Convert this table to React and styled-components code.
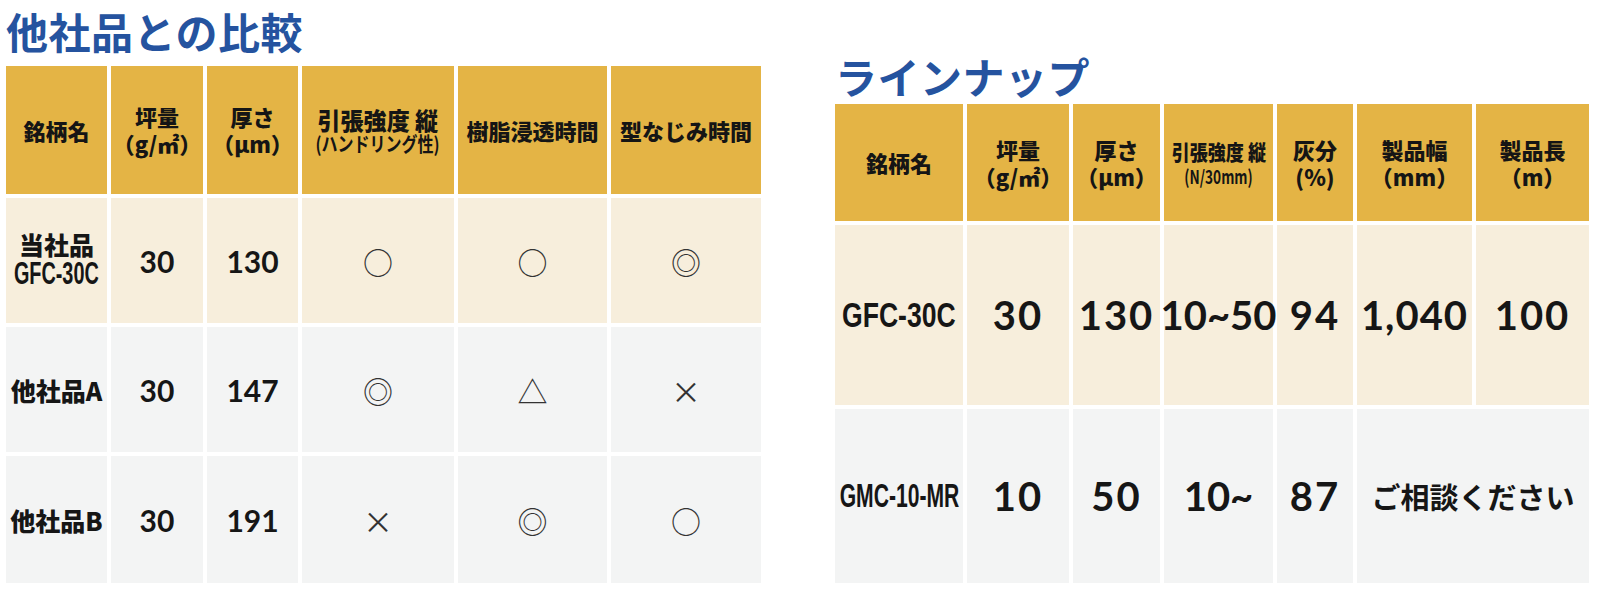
import React from "react";
import styled, { createGlobalStyle, css } from "styled-components";

const GlobalStyle = createGlobalStyle`
  html, body {
    margin: 0;
    padding: 0;
    background: #ffffff;
  }
  body {
    font-family: "Noto Sans CJK JP", "Noto Sans", sans-serif;
    color: #161616;
  }
`;

const colors = {
  title: "#25539f",
  head: "#e4b445",
  cream: "#f7eedc",
  gray: "#f3f4f4",
  mark: "#333333"
};

const Page = styled.div`
  display: flex;
  align-items: flex-start;
  width: 1600px;
  height: 597px;
  padding-left: 6px;
  box-sizing: border-box;
  overflow: hidden;
`;

const Section = styled.section`
  display: flex;
  flex-direction: column;
  padding-top: ${({ $top }) => $top}px;
  margin-left: ${({ $left = 0 }) => $left}px;
`;

const Title = styled.h2`
  margin: 0 0 ${({ $after }) => $after}px;
  font-size: 42px;
  line-height: 42px;
  font-weight: 700;
  color: ${colors.title};
  letter-spacing: 0.5px;
`;

const Grid = styled.div`
  display: grid;
  grid-template-columns: ${({ $cols }) => $cols};
  grid-template-rows: ${({ $rows }) => $rows};
  gap: 4px;
`;

const cellBase = css`
  display: flex;
  flex-direction: column;
  align-items: center;
  justify-content: center;
  text-align: center;
  white-space: nowrap;
  overflow: visible;
`;

const HeadCell = styled.div`
  ${cellBase};
  background: ${colors.head};
  font-weight: 900;
  font-size: ${({ $size = 22 }) => $size}px;
  line-height: 27px;
  color: #151515;
`;

const Cell = styled.div`
  ${cellBase};
  background: ${({ $tone }) => colors[$tone]};
  grid-column: span ${({ $span = 1 }) => $span};
`;

const Squeeze = styled.span`
  display: inline-block;
  font-size: ${({ $size = 22 }) => $size}px;
  transform: scaleX(${({ $x = 0.8 }) => $x});
  transform-origin: center;
`;

const Note = styled.span`
  display: inline-block;
  font-size: ${({ $size = 16 }) => $size}px;
  line-height: 22px;
  font-weight: 700;
  transform: scaleX(${({ $x = 0.75 }) => $x});
  transform-origin: center;
`;

const Label = styled.div`
  font-size: 25px;
  line-height: 28px;
  font-weight: 900;
`;

const Code = styled.span`
  display: inline-block;
  font-family: "Liberation Sans", Arial, sans-serif;
  font-weight: 700;
  font-size: ${({ $size = 30 }) => $size}px;
  line-height: 1.05;
  transform: scaleX(${({ $x = 0.7 }) => $x});
  transform-origin: center;
`;

const Num = styled.span`
  font-family: Lato, "Noto Sans", sans-serif;
  font-weight: 700;
  font-size: ${({ $size = 30 }) => $size}px;
  letter-spacing: ${({ $track = 0 }) => $track}px;
  line-height: 1;
`;

const Mark = styled.span`
  font-size: 30px;
  line-height: 1;
  font-weight: 400;
  color: ${colors.mark};
`;

const Ask = styled.span`
  font-size: 29px;
  font-weight: 600;
  line-height: 1;
`;

const compareRows = [
  { tone: "cream", name: "当社品", code: "GFC-30C", weight: "30", thick: "130", marks: ["○", "○", "◎"] },
  { tone: "gray", name: "他社品A", weight: "30", thick: "147", marks: ["◎", "△", "×"] },
  { tone: "gray", name: "他社品B", weight: "30", thick: "191", marks: ["×", "◎", "○"] }
];

const Comparison = () => (
  <Section $top={10}>
    <Title $after={14}>他社品との比較</Title>
    <Grid $cols="101px 92px 91px 152px 149px 150px" $rows="128px 125px 125px 127px">
      <HeadCell>銘柄名</HeadCell>
      <HeadCell>
        <span>坪量</span>
        <span>（g/㎡）</span>
      </HeadCell>
      <HeadCell>
        <span>厚さ</span>
        <span>（μm）</span>
      </HeadCell>
      <HeadCell>
        <Squeeze $size={24} $x={0.96}>引張強度 縦</Squeeze>
        <Note $size={20} $x={0.8}>(ハンドリング性)</Note>
      </HeadCell>
      <HeadCell>樹脂浸透時間</HeadCell>
      <HeadCell>型なじみ時間</HeadCell>

      {compareRows.map(row => (
        <React.Fragment key={row.name}>
          <Cell $tone={row.tone}>
            <Label>{row.name}</Label>
            {row.code && <Code $size={31} $x={0.64}>{row.code}</Code>}
          </Cell>
          <Cell $tone={row.tone}>
            <Num>{row.weight}</Num>
          </Cell>
          <Cell $tone={row.tone}>
            <Num>{row.thick}</Num>
          </Cell>
          {row.marks.map((m, i) => (
            <Cell key={i} $tone={row.tone}>
              <Mark>{m}</Mark>
            </Cell>
          ))}
        </React.Fragment>
      ))}
    </Grid>
  </Section>
);

const Lineup = () => (
  <Section $top={55} $left={74}>
    <Title $after={7}>ラインナップ</Title>
    <Grid $cols="128px 102px 87px 109px 76px 115px 113px" $rows="117px 180px 174px">
      <HeadCell>銘柄名</HeadCell>
      <HeadCell>
        <span>坪量</span>
        <span>（g/㎡）</span>
      </HeadCell>
      <HeadCell>
        <span>厚さ</span>
        <span>（μm）</span>
      </HeadCell>
      <HeadCell>
        <Squeeze $size={21} $x={0.86}>引張強度 縦</Squeeze>
        <Note $size={19} $x={0.72}>(N/30mm)</Note>
      </HeadCell>
      <HeadCell>
        <span>灰分</span>
        <span>(%)</span>
      </HeadCell>
      <HeadCell>
        <span>製品幅</span>
        <span>（mm）</span>
      </HeadCell>
      <HeadCell>
        <span>製品長</span>
        <span>（m）</span>
      </HeadCell>

      <Cell $tone="cream">
        <Code $size={35} $x={0.76}>GFC-30C</Code>
      </Cell>
      <Cell $tone="cream"><Num $size={40} $track={2}>30</Num></Cell>
      <Cell $tone="cream"><Num $size={40} $track={2}>130</Num></Cell>
      <Cell $tone="cream"><Num $size={40} $track={0}>10~50</Num></Cell>
      <Cell $tone="cream"><Num $size={40} $track={2}>94</Num></Cell>
      <Cell $tone="cream"><Num $size={40} $track={1}>1,040</Num></Cell>
      <Cell $tone="cream"><Num $size={40} $track={2}>100</Num></Cell>

      <Cell $tone="gray">
        <Code $size={33} $x={0.64}>GMC-10-MR</Code>
      </Cell>
      <Cell $tone="gray"><Num $size={40} $track={2}>10</Num></Cell>
      <Cell $tone="gray"><Num $size={40} $track={2}>50</Num></Cell>
      <Cell $tone="gray"><Num $size={40} $track={0}>10~</Num></Cell>
      <Cell $tone="gray"><Num $size={40} $track={2}>87</Num></Cell>
      <Cell $tone="gray" $span={2}>
        <Ask>ご相談ください</Ask>
      </Cell>
    </Grid>
  </Section>
);

const App = () => (
  <>
    <GlobalStyle />
    <Page>
      <Comparison />
      <Lineup />
    </Page>
  </>
);

export default App;
